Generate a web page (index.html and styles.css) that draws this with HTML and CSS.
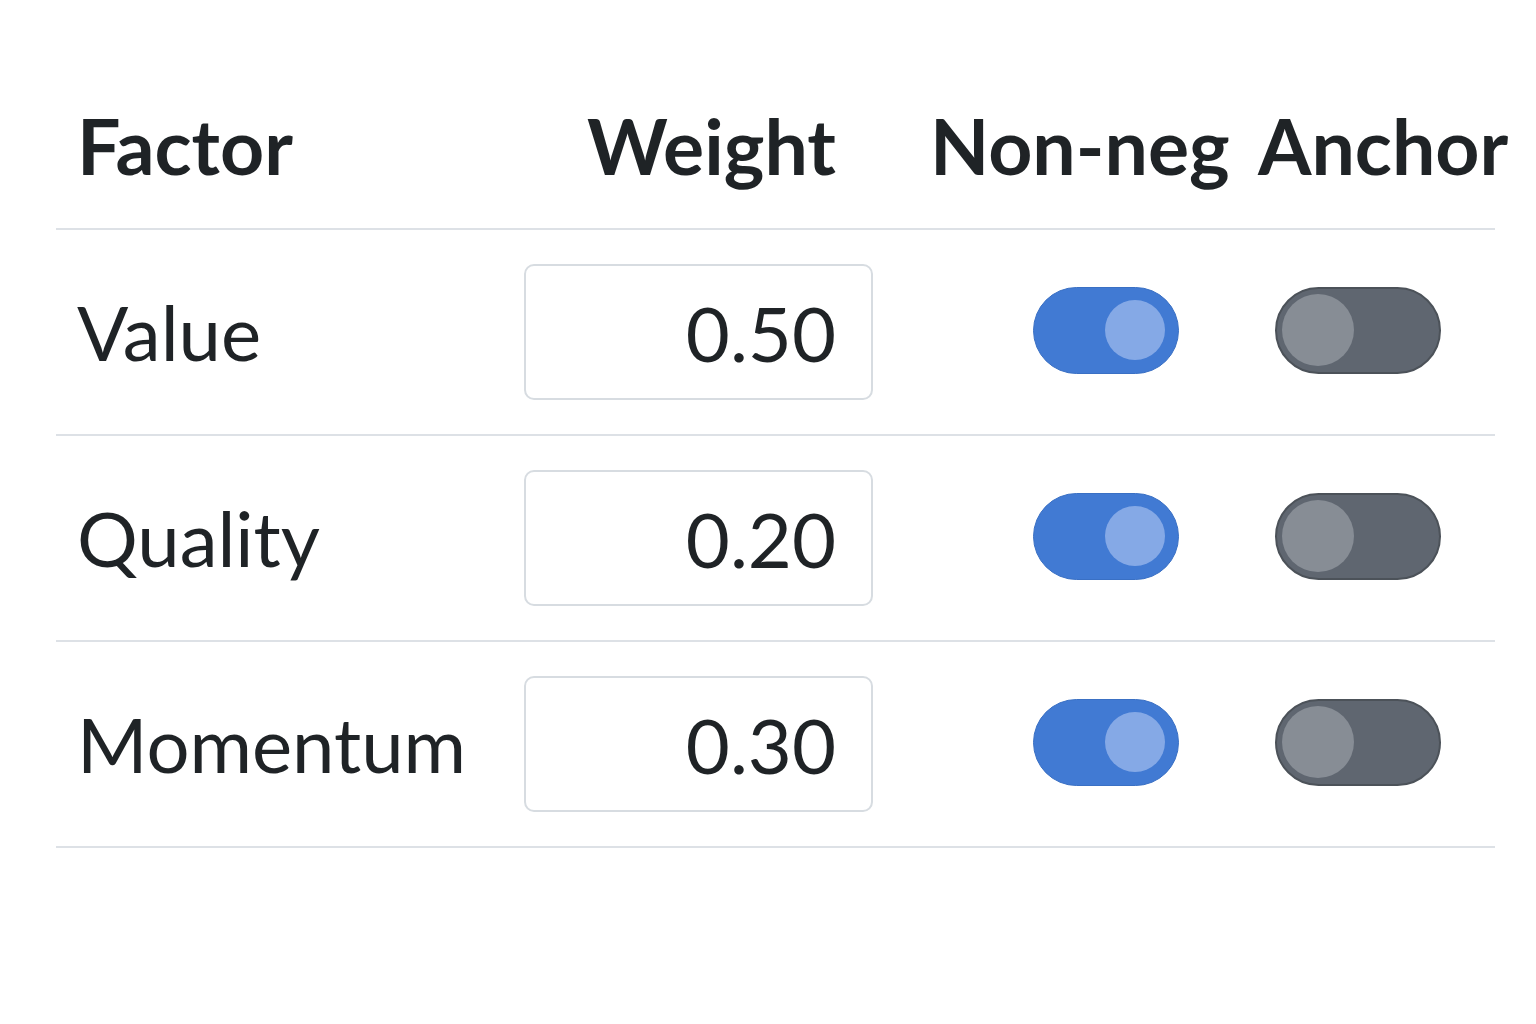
FILE: index.html
```
<!DOCTYPE html>
<html lang="en">
<head>
  <meta charset="UTF-8" />
  <meta name="viewport" content="width=device-width, initial-scale=1.0" />
  <title>Factor Weights</title>
  <link rel="stylesheet" href="styles.css">
</head>
<body>
  <div class="factors">
    <div class="row head">
      <div class="cell name">Factor</div>
      <div class="cell weight">Weight</div>
      <div class="cell nonneg">Non-neg</div>
      <div class="cell anchor">Anchor</div>
    </div>

    <div class="row">
      <div class="cell name">Value</div>
      <div class="cell weight"><input type="text" value="0.50" /></div>
      <div class="cell nonneg"><span class="switch on"><span class="knob"></span></span></div>
      <div class="cell anchor"><span class="switch off"><span class="knob"></span></span></div>
    </div>

    <div class="row">
      <div class="cell name">Quality</div>
      <div class="cell weight"><input type="text" value="0.20" /></div>
      <div class="cell nonneg"><span class="switch on"><span class="knob"></span></span></div>
      <div class="cell anchor"><span class="switch off"><span class="knob"></span></span></div>
    </div>

    <div class="row">
      <div class="cell name">Momentum</div>
      <div class="cell weight"><input type="text" value="0.30" /></div>
      <div class="cell nonneg"><span class="switch on"><span class="knob"></span></span></div>
      <div class="cell anchor"><span class="switch off"><span class="knob"></span></span></div>
    </div>
  </div>
</body>
</html>
```

FILE: styles.css
```
body {
  margin: 0;
  background: #ffffff;
  color: #1f2326;
  font-family: "Lato", sans-serif;
}
.factors {
  width: 1439px;
  margin-left: 56px;
  padding-top: 104px;
}
.row {
  display: grid;
  grid-template-columns: 468px 349px 367px 255px;
  align-items: center;
  height: 204px;
  border-bottom: 2px solid #dde1e6;
}
.row.head {
  height: 124px;
  align-items: start;
}
.cell {
  font-size: 76px;
  line-height: 1;
  white-space: nowrap;
}
.head .cell {
  font-size: 77px;
  font-weight: 700;
  padding-top: 3px;
}
.name {
  padding-left: 21px;
}
.head .weight {
  text-align: right;
  padding-right: 37px;
}
.head .nonneg {
  padding-left: 57px;
}
.head .anchor {
  padding-left: 18px;
}
.weight input {
  box-sizing: border-box;
  width: 349px;
  height: 136px;
  border: 2px solid #d7dce1;
  border-radius: 10px;
  padding: 0 35px 0 0;
  text-align: right;
  font-family: inherit;
  font-size: 76px;
  color: #1f2326;
  background: #fff;
  display: block;
}
.switch {
  display: block;
  position: relative;
  height: 87px;
  margin-bottom: 4px;
  border-radius: 44px;
  box-sizing: border-box;
}
.switch.on {
  width: 146px;
  margin-left: 160px;
  background: #417ad3;
  border: 1px solid #3a70c4;
}
.switch.off {
  width: 166px;
  margin-left: 35px;
  background: #5f6670;
  border: 2px solid #4c5259;
}
.knob {
  position: absolute;
  top: 50%;
  border-radius: 50%;
  transform: translateY(-50%);
}
.on .knob {
  right: 13px;
  width: 60px;
  height: 60px;
  background: #85a9e6;
}
.off .knob {
  left: 5px;
  width: 72px;
  height: 72px;
  background: #878d95;
}
```
